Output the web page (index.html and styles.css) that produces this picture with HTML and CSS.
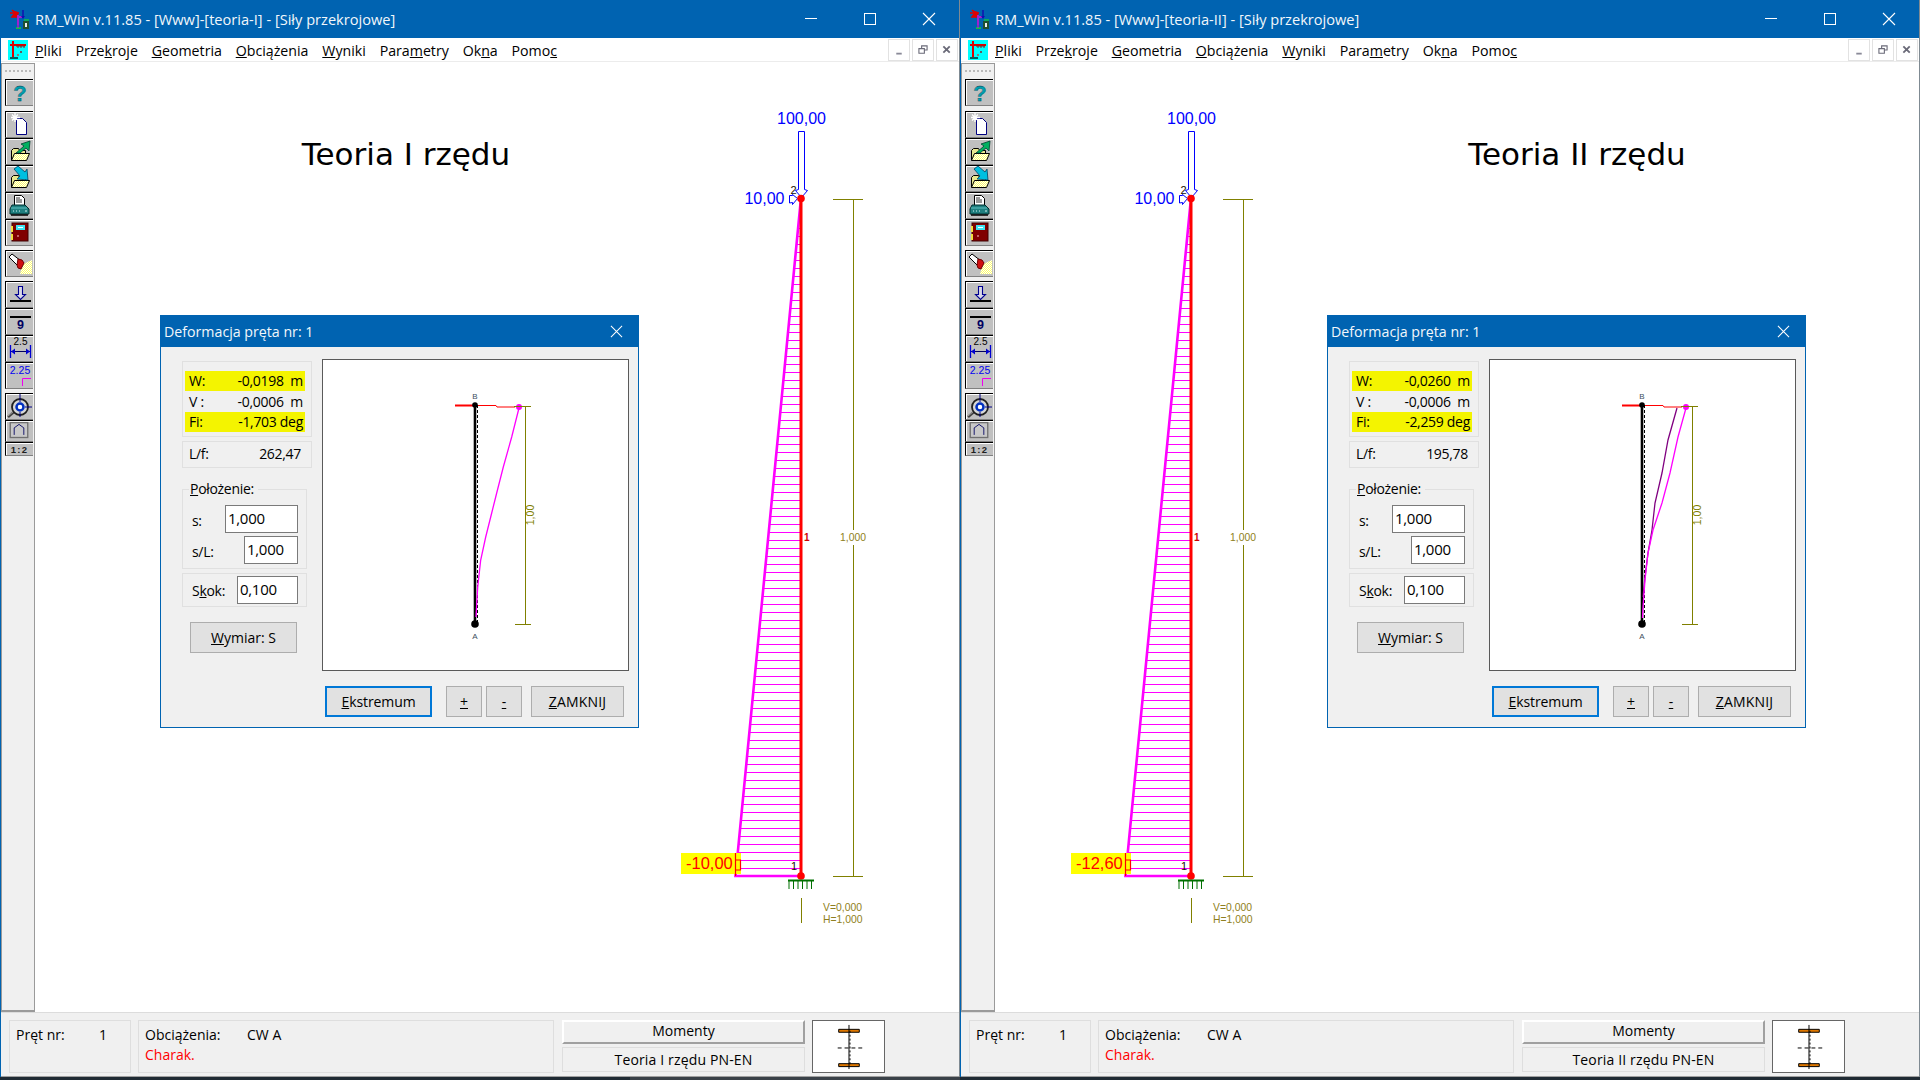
FILE: index.html
```html
<!DOCTYPE html>
<html lang="pl">
<head>
<meta charset="utf-8">
<title>RM_Win</title>
<link rel="stylesheet" href="styles.css">
</head>
<body>
<svg class="defs" aria-hidden="true">
  <defs>
    <symbol id="i-app" viewBox="0 0 22 22">
      <path d="M1 5h9M3 2l3 3-3 4h5l1-5" fill="#e00000" stroke="#e00000" stroke-width="1.5"/>
      <path d="M9 7v10M9 9h6" stroke="#a020d0" stroke-width="2" fill="none"/>
      <path d="M14 2v8" stroke="#1010b0" stroke-width="1.5"/><path d="M12 8l2 3 2-3z" fill="#1010b0"/>
      <path d="M7 20h5" stroke="#10c040" stroke-width="2"/><path d="M9 16v4" stroke="#a020d0" stroke-width="1.5"/>
      <rect x="14" y="13" width="6" height="8" fill="#205030"/><path d="M16 15h2v4h-2z" fill="#f0f0f0"/><path d="M15 12h5" stroke="#10c040" stroke-width="1.5"/>
    </symbol>
    <symbol id="i-doc" viewBox="0 0 20 20">
      <rect width="20" height="20" fill="#00ffff"/>
      <path d="M5 1v17" stroke="#e00000" stroke-width="2"/><path d="M2 5h16" stroke="#e00000" stroke-width="2"/>
      <path d="M8 6h9M10 6v2M13 6v2M16 6v2" stroke="#802020" stroke-width="1"/>
      <rect x="12" y="11" width="2" height="2" fill="#606060"/><rect x="9" y="14" width="2" height="2" fill="#808080"/>
      <path d="M2 18h8" stroke="#006060" stroke-width="2"/>
    </symbol>
    <pattern id="dither" width="2" height="2" patternUnits="userSpaceOnUse"><rect width="2" height="2" fill="#ffff66"/><rect width="1" height="1" fill="#fff"/><rect x="1" y="1" width="1" height="1" fill="#fff"/></pattern>
    <symbol id="t-new" viewBox="0 0 28 26">
      <path d="M11.5 7.5h6l4 4v12h-10z" fill="#fff" stroke="#000080"/>
      <path d="M10 2v9M6 6.5h9M7 3.5l6 6M13 3.5l-6 6" stroke="#fff" stroke-width="1.3"/>
    </symbol>
    <symbol id="t-open" viewBox="0 0 28 26">
      <path d="M6.5 22.5v-10l2-2h5l1 2h6v3" fill="#e8e890" stroke="#000"/>
      <path d="M6.5 22.500l3-7h15l-3 7z" fill="url(#dither)" stroke="#000"/>
      <path d="M11 15l8-7-3-2 9-3-1 10-3-3-6 5z" fill="#00b060" stroke="#004030" stroke-width=".8"/>
    </symbol>
    <symbol id="t-open2" viewBox="0 0 28 26">
      <path d="M6.5 22.5v-10l2-2h5l1 2h6v3" fill="#e8e890" stroke="#000"/>
      <path d="M6.5 22.500l3-7h15l-3 7z" fill="url(#dither)" stroke="#000"/>
      <path d="M9 4l4-3 7 6 2-3 1 11-11-1 3-3z" fill="#00c0e0" stroke="#004060" stroke-width=".8"/>
    </symbol>
    <symbol id="t-print" viewBox="0 0 28 26">
      <path d="M9.5 3.500h7l3 3v7h-10z" fill="#fff" stroke="#000"/>
      <path d="M11 6h4M11 8h6M11 10h6" stroke="#000" stroke-width=".8"/>
      <path d="M7 13h13l4 4v5H5v-5z" fill="#208080" stroke="#003030"/>
      <path d="M6 16h16" stroke="#60c0c0"/><path d="M6 23h17" stroke="#000" stroke-width="1.5"/>
      <path d="M8 19h1M11 19h1M14 19h1M20 19h2" stroke="#d0f0f0"/>
    </symbol>
    <symbol id="t-book" viewBox="0 0 28 26">
      <rect x="7" y="4" width="16" height="18" fill="#800000" stroke="#400000"/>
      <rect x="11" y="6" width="9" height="5" fill="#40e0f0"/><path d="M13 8.500h5" stroke="#fff"/>
      <path d="M7 7v6M7 15v6" stroke="#f0e040" stroke-width="2"/>
      <rect x="12" y="16" width="2" height="2" fill="#c06060"/>
    </symbol>
    <symbol id="t-torch" viewBox="0 0 28 26">
      <path d="M18 14l9-4v14H15z" fill="url(#dither)"/>
      <path d="M4 7l3-3 9 7-4 4z" fill="#fff" stroke="#000"/>
      <path d="M13 9l4 1 2 3-3 6-3-1-1-3z" fill="#d01010" stroke="#700000"/>
    </symbol>
    <symbol id="t-load" viewBox="0 0 28 26">
      <path d="M13.500 5.500h4v8h3l-5 5-5-5h3z" fill="#d8d8e8" stroke="#000090" stroke-width="1.100"/>
      <path d="M5 20h21" stroke="#000" stroke-width="2"/>
    </symbol>
    <symbol id="t-dim" viewBox="0 0 28 14">
      <path d="M5.500 1v13M25.500 1v13" stroke="#0000d0" stroke-width="1.300"/>
      <path d="M6 7.500h19" stroke="#000060"/><path d="M6 7.500l4-3v6zM25 7.500l-4-3v6z" fill="#0000d0"/>
    </symbol>
    <symbol id="t-lens" viewBox="0 0 28 26">
      <path d="M3 24l7-6" stroke="#404040" stroke-width="2.500"/>
      <path d="M3 23l6-5" stroke="#c0c0c0" stroke-width=".8"/>
      <circle cx="15" cy="14" r="8" fill="#d8d8d8" stroke="#202020" stroke-width="1.800"/>
      <circle cx="15" cy="14" r="3.500" fill="#fff" stroke="#0030c0" stroke-width="2.500"/>
      <path d="M15 1v8M15 19v5M20 14h7" stroke="#000080"/>
    </symbol>
    <symbol id="t-arch" viewBox="0 0 28 24">
      <rect x="4" y="3" width="20" height="17" fill="#c8c8c8" stroke="#707070" stroke-width="1.500"/>
      <path d="M8.500 17v-8l5.500-4 5.500 4v8" fill="none" stroke="#000060"/>
    </symbol>
  </defs>
</svg>

<div class="desktop">

<section class="window">
  <header class="titlebar">
    <svg class="app-icon"><use href="#i-app"/></svg>
    <span class="title-text">RM_Win v.11.85 - [Www]-[teoria-I] - [Siły przekrojowe]</span>
    <div class="caption">
      <svg class="cap-btn" viewBox="0 0 59 38"><path d="M23 18.500h12" stroke="#fff"/></svg>
      <svg class="cap-btn" viewBox="0 0 59 38"><rect x="23.500" y="13.500" width="11" height="11" fill="none" stroke="#fff"/></svg>
      <svg class="cap-btn" viewBox="0 0 59 38"><path d="M23 13l12 12M35 13L23 25" stroke="#fff" stroke-width="1.100"/></svg>
    </div>
  </header>
  <nav class="menubar">
    <svg class="doc-icon"><use href="#i-doc"/></svg>
    <ul class="menu">
      <li><u>P</u>liki</li><li>Prze<u>k</u>roje</li><li><u>G</u>eometria</li><li><u>O</u>bciążenia</li><li><u>W</u>yniki</li><li>Para<u>m</u>etry</li><li>Ok<u>n</u>a</li><li>Pomo<u>c</u></li>
    </ul>
    <div class="mdi">
      <svg class="mdi-btn" viewBox="0 0 22 22"><path d="M8 15h6" stroke="#8a8a98" stroke-width="2"/></svg>
      <svg class="mdi-btn" viewBox="0 0 22 22"><path d="M9.500 9V6.500h6V11H13M6.500 9.500h6v5h-6z" fill="none" stroke="#6a6a78" stroke-width="1.200"/></svg>
      <svg class="mdi-btn" viewBox="0 0 22 22"><path d="M7 7l7 7M14 7l-7 7" stroke="#6a6a78" stroke-width="2"/></svg>
    </div>
  </nav>
  <div class="workspace">
    <aside class="toolbar">
      <div class="gripper"></div>
      <div class="tb-group tb-first">
        <button class="tb"><svg viewBox="0 0 28 26"><text class="tb-q" x="15" y="22">?</text></svg></button>
      </div>
      <div class="tb-group">
        <button class="tb"><svg><use href="#t-new"/></svg></button>
        <button class="tb"><svg><use href="#t-open"/></svg></button>
        <button class="tb"><svg><use href="#t-open2"/></svg></button>
        <button class="tb"><svg><use href="#t-print"/></svg></button>
        <button class="tb"><svg><use href="#t-book"/></svg></button>
      </div>
      <div class="tb-group">
        <button class="tb"><svg><use href="#t-torch"/></svg></button>
      </div>
      <div class="tb-group">
        <button class="tb"><svg><use href="#t-load"/></svg></button>
        <button class="tb"><svg viewBox="0 0 28 26"><path d="M5 9h21" stroke="#000" stroke-width="2"/><text class="tb-nine" x="15.500" y="21">9</text></svg></button>
        <button class="tb"><svg viewBox="0 0 28 26"><text class="tb-small" x="15.500" y="10">2.5</text><use href="#t-dim" x="0" y="9" width="28" height="14"/></svg></button>
        <button class="tb"><svg viewBox="0 0 28 26"><text class="tb-small tb-blue" x="15" y="12">2.25</text><path d="M17.500 24v-7.500H26" fill="none" stroke="#f000f0"/></svg></button>
      </div>
      <div class="tb-group tb-first">
        <button class="tb"><svg><use href="#t-lens"/></svg></button>
        <button class="tb tb-arch"><svg><use href="#t-arch"/></svg></button>
        <button class="tb tb-scale"><span>1:2</span></button>
      </div>
    </aside>
    <main class="canvas">
      <svg class="drawing" viewBox="35 62 924 950">
        <defs><pattern id="hatch-a" x="0" y="876" width="10" height="8" patternUnits="userSpaceOnUse"><rect width="10" height="1" fill="#ff00ff"/></pattern></defs>
        <text class="heading" x="406" y="165">Teoria I rzędu</text>
        <text class="lbl-blue mid" x="801.500" y="124">100,00</text>
        <text class="lbl-blue end" x="784.500" y="204">10,00</text>
        <path class="load-arrow" d="M798.500 131.500h6v58l3 1-6 7-6-7 3-1z"/>
        <path class="load-arrow" d="M789.500 195.500h3v-1l5 4-5 6v-2l-3 .5z"/>
        <text class="lbl-dark" x="790.500" y="194">2</text>
        <polygon points="801,198 735,876 801,876" fill="url(#hatch-a)"/>
        <path d="M801 198L735.500 876H801" fill="none" stroke="#ff00ff" stroke-width="2.600"/>
        <rect x="681" y="853" width="60" height="21" fill="#ffff00"/>
        <path d="M735.500 853v23M735.500 860h5v10h-5" fill="none" stroke="#ff0000" stroke-width="1.200"/>
        <text class="lbl-red" x="686" y="869">-10,00</text>
        <path d="M801 198v679" stroke="#ff0000" stroke-width="3"/>
        <circle cx="801" cy="198.500" r="3.800" fill="#ff0000"/>
        <circle cx="801" cy="876" r="3.800" fill="#ff0000"/>
        <text class="lbl-dark" x="791" y="870">1</text>
        <text class="lbl-node" x="804" y="541">1</text>
        <path d="M788 880.500h26" stroke="#007000" stroke-width="2"/>
        <path d="M789 880v9M793.500 880v9M798 880v9M802.500 880v9M807 880v9M811.500 880v9" stroke="#007000"/>
        <path d="M801.500 898v25" stroke="#808000"/>
        <path d="M833 199.500h30M833 876.500h30M853.500 199v331M853.500 545v331" fill="none" stroke="#808000"/>
        <text class="lbl-olive mid" x="853" y="541">1,000</text>
        <text class="lbl-olive" x="823" y="911">V=0,000</text>
        <text class="lbl-olive" x="823" y="923">H=1,000</text>
      </svg>
      <div class="dialog dialog-a">
        <header class="dlg-title">
          <span>Deformacja pręta nr: 1</span>
          <svg class="dlg-close" viewBox="0 0 14 14"><path d="M1 1l12 12M13 1L1 13" stroke="#fff" stroke-width="1.100"/></svg>
        </header>
        <div class="dlg-body">
          <div class="dlg-main">
            <div class="dlg-side">
              <div class="group readout">
                <div class="row hl"><span>W:</span><span class="val">-0,0198  m</span></div>
                <div class="row row-v"><span>V :</span><span class="val">-0,0006  m</span></div>
                <div class="row hl"><span>Fi:</span><span class="val">-1,703 deg</span></div>
              </div>
              <div class="group lf"><span>L/f:</span><span>262,47</span></div>
              <div class="group pos">
                <div class="legend"><u>P</u>ołożenie:</div>
                <div class="field"><span>s:</span><span class="input input-s">1,000</span></div>
                <div class="field"><span>s/L:</span><span class="input input-sl">1,000</span></div>
              </div>
              <div class="group skok">
                <span>S<u>k</u>ok:</span><span class="input input-k">0,100</span>
              </div>
              <button class="btn btn-wymiar"><u>W</u>ymiar: S</button>
            </div>
            <div class="preview">
              <svg viewBox="323 360 305 310">
                <text class="lbl-mini" x="475" y="398.500">B</text>
                <path d="M455 405.500h20" stroke="#ff0000" stroke-width="2"/>
                <path d="M475 405.500h21l1 1.500h18" fill="none" stroke="#ff0000"/>
                <path d="M475 405v219" stroke="#000" stroke-width="2.600"/>
                <path d="M477.500 405v219" stroke="#000" stroke-dasharray="3 2"/>
                <circle cx="475" cy="405" r="2.800" fill="#000"/>
                <circle cx="475" cy="624" r="3.800" fill="#000"/>
                <path d="M519 408L511.700 437L503.300 467L496.700 493L491.700 513L485.700 537L480.700 560L477.700 587L476 617" fill="none" stroke="#ff00ff" stroke-width="1.300"/>
                <circle cx="519" cy="407" r="3" fill="#ff00ff"/>
                <path d="M514 406.500h17M525.500 406v218M515 624.500h16" fill="none" stroke="#808000"/>
                <text class="lbl-dim-rot" transform="translate(534 515) rotate(-90)">1,00</text>
                <text class="lbl-mini" x="475" y="639">A</text>
              </svg>
            </div>
          </div>
          <div class="dlg-foot">
            <button class="btn btn-ext"><u>E</u>kstremum</button>
            <button class="btn btn-pm"><u>+</u></button>
            <button class="btn btn-pm btn-minus"><u>-</u></button>
            <button class="btn btn-close"><u>Z</u>AMKNIJ</button>
          </div>
        </div>
      </div>
    </main>
  </div>
  <footer class="statusbar">
    <div class="panel panel-bar"><span class="pb-label">Pręt nr:</span><span>1</span></div>
    <div class="panel panel-load">
      <div><span class="pl-label">Obciążenia:</span><span>CW A</span></div>
      <div class="charak">Charak.</div>
    </div>
    <div class="st-mid">
      <div class="st-btn">Momenty</div>
      <div class="st-info">Teoria I rzędu PN-EN</div>
    </div>
    <svg class="section" viewBox="0 0 72 52">
      <path d="M26 8.500h21v3H26zM26 43.500h21v3H26z" fill="#e07800" stroke="#000"/>
      <path d="M36.500 4v45" stroke="#000"/>
      <path d="M37.500 10v35" stroke="#000" stroke-dasharray="2 2"/>
      <path d="M25 27.500h25" stroke="#000" stroke-dasharray="4 3"/>
    </svg>
  </footer>
</section>

<section class="window">
  <header class="titlebar">
    <svg class="app-icon"><use href="#i-app"/></svg>
    <span class="title-text">RM_Win v.11.85 - [Www]-[teoria-II] - [Siły przekrojowe]</span>
    <div class="caption">
      <svg class="cap-btn" viewBox="0 0 59 38"><path d="M23 18.500h12" stroke="#fff"/></svg>
      <svg class="cap-btn" viewBox="0 0 59 38"><rect x="23.500" y="13.500" width="11" height="11" fill="none" stroke="#fff"/></svg>
      <svg class="cap-btn" viewBox="0 0 59 38"><path d="M23 13l12 12M35 13L23 25" stroke="#fff" stroke-width="1.100"/></svg>
    </div>
  </header>
  <nav class="menubar">
    <svg class="doc-icon"><use href="#i-doc"/></svg>
    <ul class="menu">
      <li><u>P</u>liki</li><li>Prze<u>k</u>roje</li><li><u>G</u>eometria</li><li><u>O</u>bciążenia</li><li><u>W</u>yniki</li><li>Para<u>m</u>etry</li><li>Ok<u>n</u>a</li><li>Pomo<u>c</u></li>
    </ul>
    <div class="mdi">
      <svg class="mdi-btn" viewBox="0 0 22 22"><path d="M8 15h6" stroke="#8a8a98" stroke-width="2"/></svg>
      <svg class="mdi-btn" viewBox="0 0 22 22"><path d="M9.500 9V6.500h6V11H13M6.500 9.500h6v5h-6z" fill="none" stroke="#6a6a78" stroke-width="1.200"/></svg>
      <svg class="mdi-btn" viewBox="0 0 22 22"><path d="M7 7l7 7M14 7l-7 7" stroke="#6a6a78" stroke-width="2"/></svg>
    </div>
  </nav>
  <div class="workspace">
    <aside class="toolbar">
      <div class="gripper"></div>
      <div class="tb-group tb-first">
        <button class="tb"><svg viewBox="0 0 28 26"><text class="tb-q" x="15" y="22">?</text></svg></button>
      </div>
      <div class="tb-group">
        <button class="tb"><svg><use href="#t-new"/></svg></button>
        <button class="tb"><svg><use href="#t-open"/></svg></button>
        <button class="tb"><svg><use href="#t-open2"/></svg></button>
        <button class="tb"><svg><use href="#t-print"/></svg></button>
        <button class="tb"><svg><use href="#t-book"/></svg></button>
      </div>
      <div class="tb-group">
        <button class="tb"><svg><use href="#t-torch"/></svg></button>
      </div>
      <div class="tb-group">
        <button class="tb"><svg><use href="#t-load"/></svg></button>
        <button class="tb"><svg viewBox="0 0 28 26"><path d="M5 9h21" stroke="#000" stroke-width="2"/><text class="tb-nine" x="15.500" y="21">9</text></svg></button>
        <button class="tb"><svg viewBox="0 0 28 26"><text class="tb-small" x="15.500" y="10">2.5</text><use href="#t-dim" x="0" y="9" width="28" height="14"/></svg></button>
        <button class="tb"><svg viewBox="0 0 28 26"><text class="tb-small tb-blue" x="15" y="12">2.25</text><path d="M17.500 24v-7.500H26" fill="none" stroke="#f000f0"/></svg></button>
      </div>
      <div class="tb-group tb-first">
        <button class="tb"><svg><use href="#t-lens"/></svg></button>
        <button class="tb tb-arch"><svg><use href="#t-arch"/></svg></button>
        <button class="tb tb-scale"><span>1:2</span></button>
      </div>
    </aside>
    <main class="canvas">
      <svg class="drawing" viewBox="605 62 924 950">
        <defs><pattern id="hatch-b" x="0" y="876" width="10" height="8" patternUnits="userSpaceOnUse"><rect width="10" height="1" fill="#ff00ff"/></pattern></defs>
        <text class="heading" x="1187" y="165">Teoria II rzędu</text>
        <text class="lbl-blue mid" x="801.500" y="124">100,00</text>
        <text class="lbl-blue end" x="784.500" y="204">10,00</text>
        <path class="load-arrow" d="M798.500 131.500h6v58l3 1-6 7-6-7 3-1z"/>
        <path class="load-arrow" d="M789.500 195.500h3v-1l5 4-5 6v-2l-3 .5z"/>
        <text class="lbl-dark" x="790.500" y="194">2</text>
        <polygon points="801,198 735,876 801,876" fill="url(#hatch-b)"/>
        <path d="M801 198L735.500 876H801" fill="none" stroke="#ff00ff" stroke-width="2.600"/>
        <rect x="681" y="853" width="60" height="21" fill="#ffff00"/>
        <path d="M735.500 853v23M735.500 860h5v10h-5" fill="none" stroke="#ff0000" stroke-width="1.200"/>
        <text class="lbl-red" x="686" y="869">-12,60</text>
        <path d="M801 198v679" stroke="#ff0000" stroke-width="3"/>
        <circle cx="801" cy="198.500" r="3.800" fill="#ff0000"/>
        <circle cx="801" cy="876" r="3.800" fill="#ff0000"/>
        <text class="lbl-dark" x="791" y="870">1</text>
        <text class="lbl-node" x="804" y="541">1</text>
        <path d="M788 880.500h26" stroke="#007000" stroke-width="2"/>
        <path d="M789 880v9M793.500 880v9M798 880v9M802.500 880v9M807 880v9M811.500 880v9" stroke="#007000"/>
        <path d="M801.500 898v25" stroke="#808000"/>
        <path d="M833 199.500h30M833 876.500h30M853.500 199v331M853.500 545v331" fill="none" stroke="#808000"/>
        <text class="lbl-olive mid" x="853" y="541">1,000</text>
        <text class="lbl-olive" x="823" y="911">V=0,000</text>
        <text class="lbl-olive" x="823" y="923">H=1,000</text>
      </svg>
      <div class="dialog dialog-b">
        <header class="dlg-title">
          <span>Deformacja pręta nr: 1</span>
          <svg class="dlg-close" viewBox="0 0 14 14"><path d="M1 1l12 12M13 1L1 13" stroke="#fff" stroke-width="1.100"/></svg>
        </header>
        <div class="dlg-body">
          <div class="dlg-main">
            <div class="dlg-side">
              <div class="group readout">
                <div class="row hl"><span>W:</span><span class="val">-0,0260  m</span></div>
                <div class="row row-v"><span>V :</span><span class="val">-0,0006  m</span></div>
                <div class="row hl"><span>Fi:</span><span class="val">-2,259 deg</span></div>
              </div>
              <div class="group lf"><span>L/f:</span><span>195,78</span></div>
              <div class="group pos">
                <div class="legend"><u>P</u>ołożenie:</div>
                <div class="field"><span>s:</span><span class="input input-s">1,000</span></div>
                <div class="field"><span>s/L:</span><span class="input input-sl">1,000</span></div>
              </div>
              <div class="group skok">
                <span>S<u>k</u>ok:</span><span class="input input-k">0,100</span>
              </div>
              <button class="btn btn-wymiar"><u>W</u>ymiar: S</button>
            </div>
            <div class="preview">
              <svg viewBox="323 360 305 310">
                <text class="lbl-mini" x="475" y="398.500">B</text>
                <path d="M455 405.500h20" stroke="#ff0000" stroke-width="2"/>
                <path d="M475 405.500h21l1 1.500h18" fill="none" stroke="#ff0000"/>
                <path d="M475 405v219" stroke="#000" stroke-width="2.600"/>
                <path d="M477.500 405v219" stroke="#000" stroke-dasharray="3 2"/>
                <circle cx="475" cy="405" r="2.800" fill="#000"/>
                <circle cx="475" cy="624" r="3.800" fill="#000"/>
                <path d="M510 408L501 440L495 473L488 503L485 530L481 553L478 577L476 597" fill="none" stroke="#800080" stroke-width="1.300"/>
                <path d="M519 408L511 437L503 473L495 503L486 530L481 553L478 580L476 607L475.500 618" fill="none" stroke="#ff00ff" stroke-width="1.300"/>
                <circle cx="519" cy="407" r="3" fill="#ff00ff"/>
                <path d="M514 406.500h17M525.500 406v218M515 624.500h16" fill="none" stroke="#808000"/>
                <text class="lbl-dim-rot" transform="translate(534 515) rotate(-90)">1,00</text>
                <text class="lbl-mini" x="475" y="639">A</text>
              </svg>
            </div>
          </div>
          <div class="dlg-foot">
            <button class="btn btn-ext"><u>E</u>kstremum</button>
            <button class="btn btn-pm"><u>+</u></button>
            <button class="btn btn-pm btn-minus"><u>-</u></button>
            <button class="btn btn-close"><u>Z</u>AMKNIJ</button>
          </div>
        </div>
      </div>
    </main>
  </div>
  <footer class="statusbar">
    <div class="panel panel-bar"><span class="pb-label">Pręt nr:</span><span>1</span></div>
    <div class="panel panel-load">
      <div><span class="pl-label">Obciążenia:</span><span>CW A</span></div>
      <div class="charak">Charak.</div>
    </div>
    <div class="st-mid">
      <div class="st-btn">Momenty</div>
      <div class="st-info">Teoria II rzędu PN-EN</div>
    </div>
    <svg class="section" viewBox="0 0 72 52">
      <path d="M26 8.500h21v3H26zM26 43.500h21v3H26z" fill="#e07800" stroke="#000"/>
      <path d="M36.500 4v45" stroke="#000"/>
      <path d="M37.500 10v35" stroke="#000" stroke-dasharray="2 2"/>
      <path d="M25 27.500h25" stroke="#000" stroke-dasharray="4 3"/>
    </svg>
  </footer>
</section>

</div>
<div class="taskbar"><div class="task-a"></div><div class="task-b"></div><div class="task-c"></div></div>
</body>
</html>
```
FILE: styles.css
```css
* { box-sizing: border-box; }
html, body { margin: 0; padding: 0; }
body {
  width: 1920px; height: 1080px; overflow: hidden; background: #1f2a33;
  font-family: "Open Sans", "Noto Sans", sans-serif; font-size: 14px; color: #000;
}
.defs { position: absolute; width: 0; height: 0; }
.desktop { display: grid; grid-template-columns: 960px 960px; height: 1077px; }
.window {
  display: flex; flex-direction: column; height: 1077px; background: #fff;
  border-left: 1px solid #0063b1; border-right: 1px solid #7f8a92;
}
.titlebar { display: flex; align-items: center; height: 38px; flex: none; background: #0063b1; color: #fff; }
.app-icon { width: 22px; height: 22px; margin-left: 8px; flex: none; }
.title-text { margin-left: 4px; font-size: 14.6px; color: #f2f7fb; white-space: nowrap; }
.caption { display: flex; margin-left: auto; }
.cap-btn { width: 59px; height: 38px; display: block; }

.menubar { display: flex; align-items: center; height: 24px; flex: none; background: #fff; border-bottom: 1px solid #ececec; }
.doc-icon { width: 20px; height: 20px; margin-left: 7px; flex: none; }
.menu { display: flex; gap: 13.8px; list-style: none; margin: 1px 0 0 7px; padding: 0; font-size: 14.2px; white-space: nowrap; }
.mdi { display: flex; gap: 2px; margin-left: auto; margin-right: 1px; }
.mdi-btn { width: 22px; height: 22px; border: 1px solid #e2e2e2; display: block; }

.workspace { display: flex; flex: 1; min-height: 0; }
.toolbar {
  width: 34px; flex: none; height: 949px; margin-top: 1px; background: #f0f0f0;
  border: 1px solid #9a9a9a; border-bottom: 2px solid #9a9a9a;
  display: flex; flex-direction: column; gap: 5px; padding: 6px 0 0 3px;
}
.gripper { height: 2px; width: 26px; margin: 0 0 2px 0; border-top: 2px dotted #b8b8b8; }
.tb-group { display: flex; flex-direction: column; width: 28px; margin-bottom: -1px; }
.tb-first { margin-bottom: 0; }
.tb {
  display: block; width: 28px; height: 27px; padding: 0; margin: 0; background: #c0c0c0;
  border: 0; border-top: 1px solid #000; border-left: 1px solid #000; border-bottom: 1px solid #808080;
  box-shadow: inset 1px 1px 0 #fff;
}
.tb svg { display: block; width: 28px; height: 26px; margin: -1px 0 0 -1px; overflow: visible; }
.tb-arch { height: 22px; }
.tb-arch svg { height: 21px; }
.tb-scale { height: 14px; font: bold 9.5px "Liberation Sans", sans-serif; letter-spacing: 1.2px; color: #202020; }
.tb-q { font: bold 22px "Liberation Sans", sans-serif; text-anchor: middle; fill: #00a0b0; stroke: #003040; stroke-width: .3px; }
.tb-nine { font: bold 12.5px "Liberation Sans", sans-serif; text-anchor: middle; fill: #000060; }
.tb-small { font: 10px "Liberation Sans", sans-serif; text-anchor: middle; fill: #000; }
.tb-blue { fill: #0000f0; font-size: 10.5px; }

.canvas { position: relative; flex: 1; min-width: 0; background: #fff; overflow: hidden; }
.drawing { display: block; width: 100%; height: 100%; }
.heading { font: 31px "DejaVu Sans", sans-serif; text-anchor: middle; fill: #000; }
.lbl-blue { font: 16px "Liberation Sans", sans-serif; fill: #0000ff; }
.mid { text-anchor: middle; }
.end { text-anchor: end; }
.lbl-red { font: 16.5px "Liberation Sans", sans-serif; fill: #ff0000; }
.lbl-dark { font: 11px "Liberation Sans", sans-serif; fill: #201000; }
.lbl-node { font: bold 10px "Liberation Sans", sans-serif; fill: #d00000; }
.lbl-olive { font: 10.4px "Liberation Sans", sans-serif; fill: #8f7f20; }
.lbl-mini { font: 8px "Liberation Sans", sans-serif; fill: #405060; text-anchor: middle; }
.lbl-dim-rot { font: 10.5px "Liberation Sans", sans-serif; fill: #808000; text-anchor: middle; }
.load-arrow { fill: #fff; stroke: #0000ff; stroke-width: 1; }

.dialog {
  position: absolute; top: 253px; width: 479px; height: 413px;
  background: #f0f0f0; border: 1px solid #0063b1; display: flex; flex-direction: column;
}
.dialog-a { left: 125px; }
.dialog-b { left: 332px; }
.dlg-title { display: flex; align-items: center; justify-content: space-between; height: 31px; flex: none; background: #0063b1; color: #f2f7fb; padding: 0 15px 0 3px; font-size: 14.2px; }
.dlg-close { width: 13px; height: 13px; display: block; }
.dlg-body { flex: 1; padding: 12px 9px 0 21px; }
.dlg-main { display: flex; gap: 10px; height: 312px; }
.dlg-side { width: 130px; flex: none; display: flex; flex-direction: column; font-size: 14px; letter-spacing: -0.3px; }
.group { border: 1px solid #e0e0e0; }
.readout { margin-top: 2px; height: 76px; padding: 9px 6px 0 2px; }
.row { display: flex; justify-content: space-between; align-items: center; height: 20px; padding: 0 2px 1px 4px; }
.row-v { height: 21px; }
.hl { background: #f4f400; }
.val { white-space: pre; }
.lf { display: flex; justify-content: space-between; align-items: center; margin-top: 4px; height: 27px; padding: 0 10px 2px 6px; }
.pos { margin-top: 21px; width: 125px; height: 80px; padding: 0 8px 0 9px; }
.legend { width: fit-content; margin: -11px 0 6px -3px; padding: 0 4px 0 1px; height: 20px; line-height: 20px; background: #f0f0f0; }
.field { display: flex; justify-content: space-between; align-items: center; margin-bottom: 3px; height: 28px; }
.field > span:first-child { padding-top: 3px; }
.input { display: flex; align-items: center; height: 28px; background: #fff; border: 1px solid #7a7a7a; padding: 0 0 3px 2px; font-size: 15px; }
.input-s { width: 73px; }
.input-sl { width: 54px; }
.input-k { width: 61px; }
.skok { display: flex; justify-content: space-between; align-items: center; width: 125px; margin-top: 4px; height: 34px; padding: 0 8px 0 9px; }
.btn {
  display: block; padding: 0; margin: 0; height: 31px; background: #e1e1e1; border: 1px solid #adadad;
  font: 14px "Open Sans", "Noto Sans", sans-serif; color: #000;
}
.btn-wymiar { width: 107px; margin: 15px 0 0 8px; letter-spacing: 0; }
.preview { width: 307px; height: 312px; flex: none; background: #fff; border: 1px solid #5a5a5a; }
.preview svg { display: block; width: 100%; height: 100%; }
.dlg-foot { display: flex; margin: 15px 0 0 143px; }
.btn-ext { width: 107px; border: 2px solid #0078d7; letter-spacing: -0.1px; }
.btn-pm { width: 36px; margin-left: 14px; }
.btn-minus { margin-left: 4px; }
.btn-close { width: 93px; margin-left: 9px; letter-spacing: 0.2px; }

.statusbar {
  display: flex; flex: none; height: 65px; padding: 7px 0 4px 8px; background: #f0f0f0;
  border-top: 1px solid #dcdcdc; border-bottom: 1px solid #a0a0a0; font-size: 14px;
}
.panel { height: 53px; border: 1px solid #dedede; padding: 4px 0 0 6px; }
.panel-bar { width: 122px; display: flex; }
.pb-label { width: 83px; }
.panel-load { width: 416px; margin-left: 7px; }
.pl-label { display: inline-block; width: 102px; }
.charak { color: #ff0000; margin-top: 1px; }
.st-mid { width: 243px; margin-left: 8px; display: flex; flex-direction: column; gap: 3px; text-align: center; }
.st-btn { height: 24px; line-height: 18px; border-right: 2px solid #a0a0a0; border-bottom: 2px solid #a0a0a0; border-top: 2px solid #fff; border-left: 2px solid #fff; }
.st-info { height: 26px; line-height: 23px; border: 1px solid #dedede; letter-spacing: 0.15px; }
.section { width: 73px; height: 53px; margin-left: 7px; background: #fff; border: 1px solid #666; display: block; }

.taskbar { display: flex; height: 3px; }
.task-a { width: 630px; }
.task-b { width: 330px; background: #3a4148; }
.task-c { flex: 1; }
```
